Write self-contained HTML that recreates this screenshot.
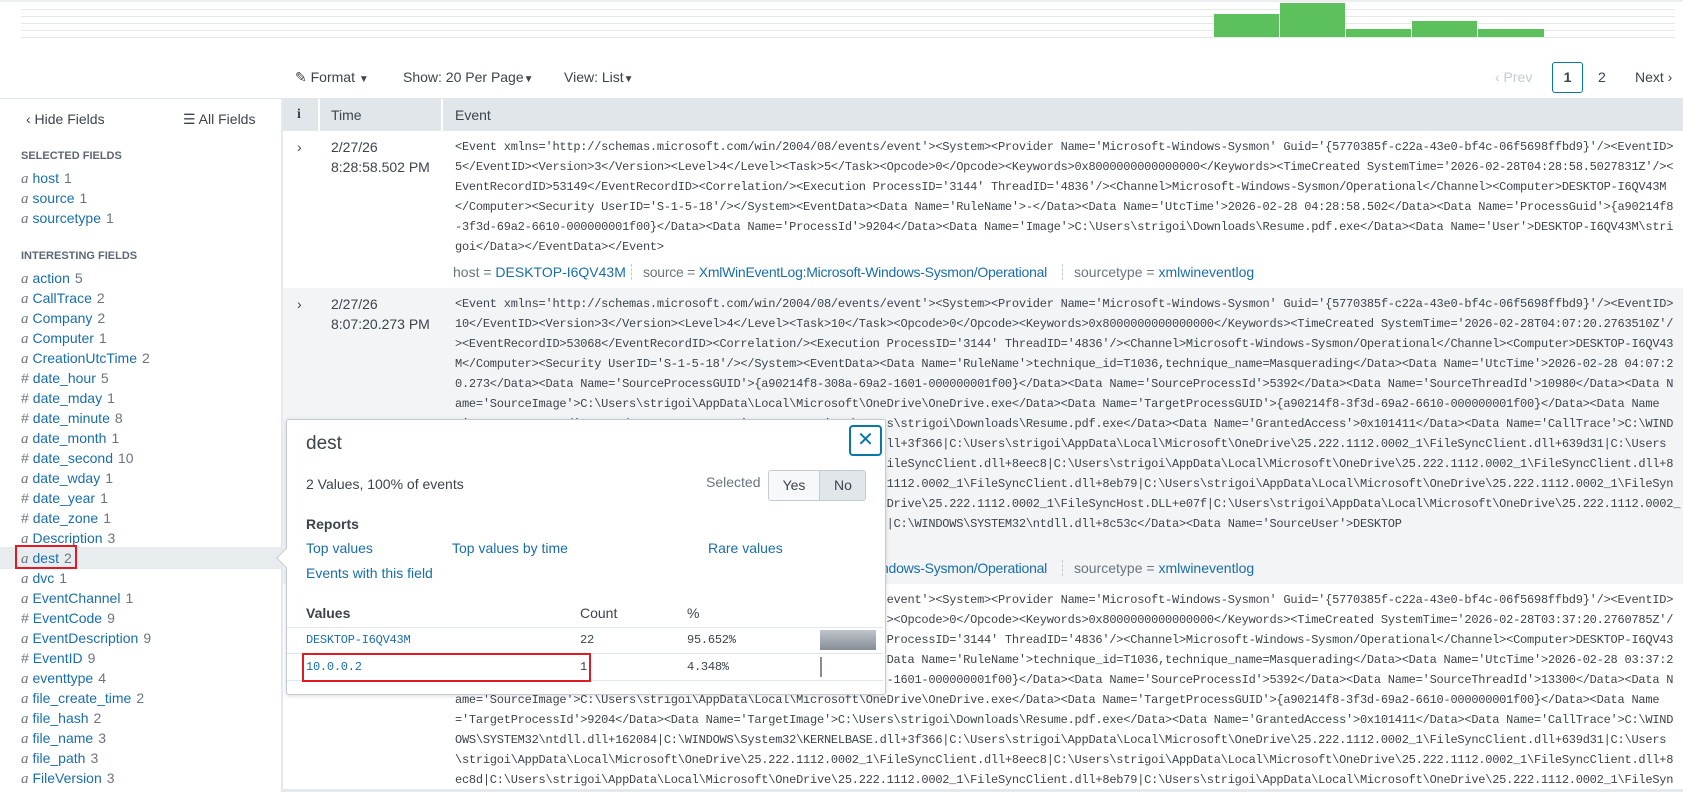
<!DOCTYPE html>
<html><head><meta charset="utf-8"><style>
*{margin:0;padding:0;box-sizing:border-box}
body{width:1683px;height:792px;overflow:hidden;background:#fff;font-family:"Liberation Sans",sans-serif;color:#3c444d;position:relative}
.a{position:absolute;white-space:nowrap;line-height:20px;height:20px}
.s{font-size:14px}
.lk{color:#1a6ea8}
.g{color:#6b7580}
.mono{font-family:"Liberation Mono",monospace;font-size:12px;letter-spacing:-0.24px;color:#3c444d}
pre.mono{white-space:pre;position:absolute;line-height:20px;overflow:hidden;right:0}
.hl{position:absolute;left:21px;height:1px;right:8px;background:#e6e8ea}
.bar{position:absolute;background:#5cc05c}
.f{position:absolute;left:21px;font-size:14px;line-height:20px;height:20px;white-space:nowrap;color:#1a6ea8}
.f i{font-family:"Liberation Serif",serif;color:#6b7580;font-size:15px;margin-right:4px}
.f b{font-weight:normal;color:#6b7580;margin-right:4px}
.f em{font-style:normal;color:#6b7580;margin-left:5px}
.sq{letter-spacing:-0.25px}
</style></head><body>
<!-- timeline -->
<div class="hl" style="top:9px"></div><div class="hl" style="top:16px"></div><div class="hl" style="top:23px"></div><div class="hl" style="top:30px"></div><div class="hl" style="top:37px"></div>
<div style="position:absolute;left:0;right:0;top:0;height:2px;background:#eceeef"></div>
<div class="bar" style="left:1214px;width:65px;top:14px;height:23px"></div>
<div class="bar" style="left:1280px;width:65px;top:3px;height:34px"></div>
<div class="bar" style="left:1346px;width:65px;top:29px;height:8px"></div>
<div class="bar" style="left:1412px;width:65px;top:21px;height:16px"></div>
<div class="bar" style="left:1478px;width:66px;top:29px;height:8px"></div>
<!-- toolbar -->
<div class="a s" style="left:295px;top:67px">&#x270E;&nbsp;Format <span style="font-size:10px">&#9660;</span></div>
<div class="a s" style="left:403px;top:67px">Show: 20 Per Page<span style="font-size:10px">&#9660;</span></div>
<div class="a s" style="left:564px;top:67px">View: List<span style="font-size:10px">&#9660;</span></div>
<div class="a s" style="left:1495px;top:67px;color:#c3cbd4">&#x2039; Prev</div>
<div style="position:absolute;left:1552px;top:62px;width:31px;height:31px;border:1px solid #0877a6;border-radius:3px;text-align:center;line-height:29px;font-size:14px;font-weight:bold;color:#3c444d">1</div>
<div class="a s" style="left:1598px;top:67px">2</div>
<div class="a s" style="left:1635px;top:67px">Next &#x203A;</div>
<!-- borders -->
<div style="position:absolute;left:0;right:0;top:98px;height:1px;background:#e1e6eb"></div>
<div style="position:absolute;left:281px;top:99px;width:2px;bottom:0;background:#e6e9ec"></div>
<!-- table header -->
<div style="position:absolute;left:283px;right:0;top:99px;height:32px;background:#e1e6eb"></div>
<div style="position:absolute;left:318px;top:99px;width:2px;height:32px;background:#fff"></div>
<div style="position:absolute;left:441px;top:99px;width:2px;height:32px;background:#fff"></div>
<div class="a" style="left:297px;top:105px;font-family:'Liberation Serif',serif;font-weight:bold;font-size:14px">i</div>
<div class="a s" style="left:331px;top:105px">Time</div>
<div class="a s" style="left:455px;top:105px">Event</div>
<!-- sidebar -->
<div class="a s" style="left:26px;top:109px">&#x2039; Hide Fields</div>
<div class="a s" style="left:183px;top:109px">&#9776; All Fields</div>
<div class="a" style="left:21px;top:146px;font-size:11px;font-weight:bold;color:#5c6773">SELECTED FIELDS</div>
<div class="f" style="top:168px"><i>a</i>host<em>1</em></div>
<div class="f" style="top:188px"><i>a</i>source<em>1</em></div>
<div class="f" style="top:208px"><i>a</i>sourcetype<em>1</em></div>
<div class="a" style="left:21px;top:246px;font-size:11px;font-weight:bold;color:#5c6773">INTERESTING FIELDS</div>
<div style="position:absolute;left:0;width:281px;top:547px;height:22px;background:#e9ecee"></div>
<div style="position:absolute;left:15px;width:62px;top:545px;height:24px;border:2px solid #e01b24"></div>
<div class="f" style="top:268px"><i>a</i>action<em>5</em></div>
<div class="f" style="top:288px"><i>a</i>CallTrace<em>2</em></div>
<div class="f" style="top:308px"><i>a</i>Company<em>2</em></div>
<div class="f" style="top:328px"><i>a</i>Computer<em>1</em></div>
<div class="f" style="top:348px"><i>a</i>CreationUtcTime<em>2</em></div>
<div class="f" style="top:368px"><b>#</b>date_hour<em>5</em></div>
<div class="f" style="top:388px"><b>#</b>date_mday<em>1</em></div>
<div class="f" style="top:408px"><b>#</b>date_minute<em>8</em></div>
<div class="f" style="top:428px"><i>a</i>date_month<em>1</em></div>
<div class="f" style="top:448px"><b>#</b>date_second<em>10</em></div>
<div class="f" style="top:468px"><i>a</i>date_wday<em>1</em></div>
<div class="f" style="top:488px"><b>#</b>date_year<em>1</em></div>
<div class="f" style="top:508px"><b>#</b>date_zone<em>1</em></div>
<div class="f" style="top:528px"><i>a</i>Description<em>3</em></div>
<div class="f" style="top:548px"><i>a</i>dest<em>2</em></div>
<div class="f" style="top:568px"><i>a</i>dvc<em>1</em></div>
<div class="f" style="top:588px"><i>a</i>EventChannel<em>1</em></div>
<div class="f" style="top:608px"><b>#</b>EventCode<em>9</em></div>
<div class="f" style="top:628px"><i>a</i>EventDescription<em>9</em></div>
<div class="f" style="top:648px"><b>#</b>EventID<em>9</em></div>
<div class="f" style="top:668px"><i>a</i>eventtype<em>4</em></div>
<div class="f" style="top:688px"><i>a</i>file_create_time<em>2</em></div>
<div class="f" style="top:708px"><i>a</i>file_hash<em>2</em></div>
<div class="f" style="top:728px"><i>a</i>file_name<em>3</em></div>
<div class="f" style="top:748px"><i>a</i>file_path<em>3</em></div>
<div class="f" style="top:768px"><i>a</i>FileVersion<em>3</em></div>
<!-- rows -->
<div style="position:absolute;left:283px;right:0;top:288px;height:296px;background:#f2f4f5"></div>
<div style="position:absolute;left:283px;right:0;top:789px;height:3px;background:#e6e9ec"></div>
<div class="a s" style="left:297px;top:137px">&#x203A;</div>
<div class="a s" style="left:331px;top:137px">2/27/26</div>
<div class="a s" style="left:331px;top:157px">8:28:58.502 PM</div>
<div class="a s" style="left:297px;top:294px">&#x203A;</div>
<div class="a s" style="left:331px;top:294px">2/27/26</div>
<div class="a s" style="left:331px;top:314px">8:07:20.273 PM</div>
<div class="a s" style="left:297px;top:590px">&#x203A;</div>
<pre class="mono" style="left:455px;top:137px">&lt;Event xmlns='http://schemas.microsoft.com/win/2004/08/events/event'&gt;&lt;System&gt;&lt;Provider Name='Microsoft-Windows-Sysmon' Guid='{5770385f-c22a-43e0-bf4c-06f5698ffbd9}'/&gt;&lt;EventID&gt;
5&lt;/EventID&gt;&lt;Version&gt;3&lt;/Version&gt;&lt;Level&gt;4&lt;/Level&gt;&lt;Task&gt;5&lt;/Task&gt;&lt;Opcode&gt;0&lt;/Opcode&gt;&lt;Keywords&gt;0x8000000000000000&lt;/Keywords&gt;&lt;TimeCreated SystemTime='2026-02-28T04:28:58.5027831Z'/&gt;&lt;
EventRecordID&gt;53149&lt;/EventRecordID&gt;&lt;Correlation/&gt;&lt;Execution ProcessID='3144' ThreadID='4836'/&gt;&lt;Channel&gt;Microsoft-Windows-Sysmon/Operational&lt;/Channel&gt;&lt;Computer&gt;DESKTOP-I6QV43M
&lt;/Computer&gt;&lt;Security UserID='S-1-5-18'/&gt;&lt;/System&gt;&lt;EventData&gt;&lt;Data Name='RuleName'&gt;-&lt;/Data&gt;&lt;Data Name='UtcTime'&gt;2026-02-28 04:28:58.502&lt;/Data&gt;&lt;Data Name='ProcessGuid'&gt;{a90214f8
-3f3d-69a2-6610-000000001f00}&lt;/Data&gt;&lt;Data Name='ProcessId'&gt;9204&lt;/Data&gt;&lt;Data Name='Image'&gt;C:\Users\strigoi\Downloads\Resume.pdf.exe&lt;/Data&gt;&lt;Data Name='User'&gt;DESKTOP-I6QV43M\stri
goi&lt;/Data&gt;&lt;/EventData&gt;&lt;/Event&gt;</pre>
<div class="a s" style="left:453px;top:262px"><span class="g">host = </span><span class="lk">DESKTOP-I6QV43M</span></div>
<div style="position:absolute;left:631px;top:264px;height:16px;border-left:1px dashed #c3cbd4"></div>
<div class="a s sq" style="left:643px;top:262px"><span class="g">source = </span><span class="lk">XmlWinEventLog:Microsoft-Windows-Sysmon/Operational</span></div>
<div style="position:absolute;left:1062px;top:264px;height:16px;border-left:1px dashed #c3cbd4"></div>
<div class="a s" style="left:1074px;top:262px"><span class="g">sourcetype = </span><span class="lk">xmlwineventlog</span></div>
<pre class="mono" style="left:455px;top:294px">&lt;Event xmlns='http://schemas.microsoft.com/win/2004/08/events/event'&gt;&lt;System&gt;&lt;Provider Name='Microsoft-Windows-Sysmon' Guid='{5770385f-c22a-43e0-bf4c-06f5698ffbd9}'/&gt;&lt;EventID&gt;
10&lt;/EventID&gt;&lt;Version&gt;3&lt;/Version&gt;&lt;Level&gt;4&lt;/Level&gt;&lt;Task&gt;10&lt;/Task&gt;&lt;Opcode&gt;0&lt;/Opcode&gt;&lt;Keywords&gt;0x8000000000000000&lt;/Keywords&gt;&lt;TimeCreated SystemTime='2026-02-28T04:07:20.2763510Z'/
&gt;&lt;EventRecordID&gt;53068&lt;/EventRecordID&gt;&lt;Correlation/&gt;&lt;Execution ProcessID='3144' ThreadID='4836'/&gt;&lt;Channel&gt;Microsoft-Windows-Sysmon/Operational&lt;/Channel&gt;&lt;Computer&gt;DESKTOP-I6QV43
M&lt;/Computer&gt;&lt;Security UserID='S-1-5-18'/&gt;&lt;/System&gt;&lt;EventData&gt;&lt;Data Name='RuleName'&gt;technique_id=T1036,technique_name=Masquerading&lt;/Data&gt;&lt;Data Name='UtcTime'&gt;2026-02-28 04:07:2
0.273&lt;/Data&gt;&lt;Data Name='SourceProcessGUID'&gt;{a90214f8-308a-69a2-1601-000000001f00}&lt;/Data&gt;&lt;Data Name='SourceProcessId'&gt;5392&lt;/Data&gt;&lt;Data Name='SourceThreadId'&gt;10980&lt;/Data&gt;&lt;Data N
ame='SourceImage'&gt;C:\Users\strigoi\AppData\Local\Microsoft\OneDrive\OneDrive.exe&lt;/Data&gt;&lt;Data Name='TargetProcessGUID'&gt;{a90214f8-3f3d-69a2-6610-000000001f00}&lt;/Data&gt;&lt;Data Name
='TargetProcessId'&gt;9204&lt;/Data&gt;&lt;Data Name='TargetImage'&gt;C:\Users\strigoi\Downloads\Resume.pdf.exe&lt;/Data&gt;&lt;Data Name='GrantedAccess'&gt;0x101411&lt;/Data&gt;&lt;Data Name='CallTrace'&gt;C:\WIND
OWS\SYSTEM32\ntdll.dll+162084|C:\WINDOWS\System32\KERNELBASE.dll+3f366|C:\Users\strigoi\AppData\Local\Microsoft\OneDrive\25.222.1112.0002_1\FileSyncClient.dll+639d31|C:\Users
\strigoi\AppData\Local\Microsoft\OneDrive\25.222.1112.0002_1\FileSyncClient.dll+8eec8|C:\Users\strigoi\AppData\Local\Microsoft\OneDrive\25.222.1112.0002_1\FileSyncClient.dll+8
ec8d|C:\Users\strigoi\AppData\Local\Microsoft\OneDrive\25.222.1112.0002_1\FileSyncClient.dll+8eb79|C:\Users\strigoi\AppData\Local\Microsoft\OneDrive\25.222.1112.0002_1\FileSyn
cClient.dll+8f1a2|C:\Users\strigoi\AppData\Local\Microsoft\OneDrive\25.222.1112.0002_1\FileSyncHost.DLL+e07f|C:\Users\strigoi\AppData\Local\Microsoft\OneDrive\25.222.1112.0002_
1\FileSyncHost.DLL+e07f|C:\WINDOWS\System32\KERNEL32.DLL+2e8d7|C:\WINDOWS\SYSTEM32\ntdll.dll+8c53c&lt;/Data&gt;&lt;Data Name='SourceUser'&gt;DESKTOP
-I6QV43M\strigoi&lt;/Data&gt;&lt;/EventData&gt;&lt;/Event&gt;</pre>
<div class="a s" style="left:453px;top:558px"><span class="g">host = </span><span class="lk">DESKTOP-I6QV43M</span></div>
<div style="position:absolute;left:631px;top:560px;height:16px;border-left:1px dashed #c3cbd4"></div>
<div class="a s sq" style="left:643px;top:558px"><span class="g">source = </span><span class="lk">XmlWinEventLog:Microsoft-Windows-Sysmon/Operational</span></div>
<div style="position:absolute;left:1062px;top:560px;height:16px;border-left:1px dashed #c3cbd4"></div>
<div class="a s" style="left:1074px;top:558px"><span class="g">sourcetype = </span><span class="lk">xmlwineventlog</span></div>
<pre class="mono" style="left:455px;top:590px">&lt;Event xmlns='http://schemas.microsoft.com/win/2004/08/events/event'&gt;&lt;System&gt;&lt;Provider Name='Microsoft-Windows-Sysmon' Guid='{5770385f-c22a-43e0-bf4c-06f5698ffbd9}'/&gt;&lt;EventID&gt;
10&lt;/EventID&gt;&lt;Version&gt;3&lt;/Version&gt;&lt;Level&gt;4&lt;/Level&gt;&lt;Task&gt;10&lt;/Task&gt;&lt;Opcode&gt;0&lt;/Opcode&gt;&lt;Keywords&gt;0x8000000000000000&lt;/Keywords&gt;&lt;TimeCreated SystemTime='2026-02-28T03:37:20.2760785Z'/
&gt;&lt;EventRecordID&gt;53012&lt;/EventRecordID&gt;&lt;Correlation/&gt;&lt;Execution ProcessID='3144' ThreadID='4836'/&gt;&lt;Channel&gt;Microsoft-Windows-Sysmon/Operational&lt;/Channel&gt;&lt;Computer&gt;DESKTOP-I6QV43
M&lt;/Computer&gt;&lt;Security UserID='S-1-5-18'/&gt;&lt;/System&gt;&lt;EventData&gt;&lt;Data Name='RuleName'&gt;technique_id=T1036,technique_name=Masquerading&lt;/Data&gt;&lt;Data Name='UtcTime'&gt;2026-02-28 03:37:2
0.273&lt;/Data&gt;&lt;Data Name='SourceProcessGUID'&gt;{a90214f8-308a-69a2-1601-000000001f00}&lt;/Data&gt;&lt;Data Name='SourceProcessId'&gt;5392&lt;/Data&gt;&lt;Data Name='SourceThreadId'&gt;13300&lt;/Data&gt;&lt;Data N
ame='SourceImage'&gt;C:\Users\strigoi\AppData\Local\Microsoft\OneDrive\OneDrive.exe&lt;/Data&gt;&lt;Data Name='TargetProcessGUID'&gt;{a90214f8-3f3d-69a2-6610-000000001f00}&lt;/Data&gt;&lt;Data Name
='TargetProcessId'&gt;9204&lt;/Data&gt;&lt;Data Name='TargetImage'&gt;C:\Users\strigoi\Downloads\Resume.pdf.exe&lt;/Data&gt;&lt;Data Name='GrantedAccess'&gt;0x101411&lt;/Data&gt;&lt;Data Name='CallTrace'&gt;C:\WIND
OWS\SYSTEM32\ntdll.dll+162084|C:\WINDOWS\System32\KERNELBASE.dll+3f366|C:\Users\strigoi\AppData\Local\Microsoft\OneDrive\25.222.1112.0002_1\FileSyncClient.dll+639d31|C:\Users
\strigoi\AppData\Local\Microsoft\OneDrive\25.222.1112.0002_1\FileSyncClient.dll+8eec8|C:\Users\strigoi\AppData\Local\Microsoft\OneDrive\25.222.1112.0002_1\FileSyncClient.dll+8
ec8d|C:\Users\strigoi\AppData\Local\Microsoft\OneDrive\25.222.1112.0002_1\FileSyncClient.dll+8eb79|C:\Users\strigoi\AppData\Local\Microsoft\OneDrive\25.222.1112.0002_1\FileSyn</pre>
<!-- popup -->
<div style="position:absolute;left:286px;top:419px;width:600px;height:276px;background:#fff;border:1px solid #c3cbd4;border-radius:3px;box-shadow:0 1px 4px rgba(0,0,0,.15)"></div>
<div style="position:absolute;left:279px;top:551px;width:14px;height:14px;background:#fff;border-left:1px solid #c3cbd4;border-bottom:1px solid #c3cbd4;transform:rotate(45deg)"></div>
<div style="position:absolute;left:287px;top:550px;width:8px;height:16px;background:#fff"></div>
<div class="a" style="left:306px;top:432px;font-size:19px;height:24px;line-height:24px">dest</div>
<div style="position:absolute;left:849px;top:425px;width:33px;height:31px;border:2px solid #0877a6;border-radius:4px;color:#0877a6;text-align:center;font-size:20px;line-height:27px">&#x2715;</div>
<div class="a s" style="left:306px;top:474px">2 Values, 100% of events</div>
<div class="a s g" style="left:706px;top:472px">Selected</div>
<div style="position:absolute;left:768px;top:470px;width:98px;height:31px;border:1px solid #c3cbd4;border-radius:3px;overflow:hidden;font-size:14px;line-height:29px">
<div style="position:absolute;left:0;top:0;width:50px;height:29px;background:#f7f8fa;text-align:center">Yes</div>
<div style="position:absolute;left:50px;top:0;width:47px;height:29px;background:#e1e6eb;border-left:1px solid #c3cbd4;text-align:center">No</div></div>
<div class="a s" style="left:306px;top:514px;font-weight:bold">Reports</div>
<div class="a s lk" style="left:306px;top:538px">Top values</div>
<div class="a s lk" style="left:452px;top:538px">Top values by time</div>
<div class="a s lk" style="left:708px;top:538px">Rare values</div>
<div class="a s lk" style="left:306px;top:563px">Events with this field</div>
<div class="a s" style="left:306px;top:603px;font-weight:bold">Values</div>
<div class="a s" style="left:580px;top:603px">Count</div>
<div class="a s" style="left:687px;top:603px">%</div>
<div style="position:absolute;left:287px;width:596px;top:627px;height:1px;background:#e1e6eb"></div>
<div style="position:absolute;left:287px;width:596px;top:653px;height:1px;background:#e1e6eb"></div>
<div style="position:absolute;left:287px;width:596px;top:680px;height:1px;background:#e1e6eb"></div>
<div class="a mono" style="left:306px;top:630px;color:#1a6ea8">DESKTOP-I6QV43M</div>
<div class="a mono" style="left:580px;top:630px">22</div>
<div class="a mono" style="left:687px;top:630px">95.652%</div>
<div style="position:absolute;left:820px;top:630px;width:56px;height:20px;background:linear-gradient(#c0c5cc,#878d96)"></div>
<div class="a mono" style="left:306px;top:657px;color:#1a6ea8">10.0.0.2</div>
<div class="a mono" style="left:580px;top:657px">1</div>
<div class="a mono" style="left:687px;top:657px">4.348%</div>
<div style="position:absolute;left:820px;top:657px;width:2px;height:20px;background:#878d96"></div>
<div style="position:absolute;left:302px;top:653px;width:289px;height:29px;border:2px solid #e01b24"></div>
</body></html>
